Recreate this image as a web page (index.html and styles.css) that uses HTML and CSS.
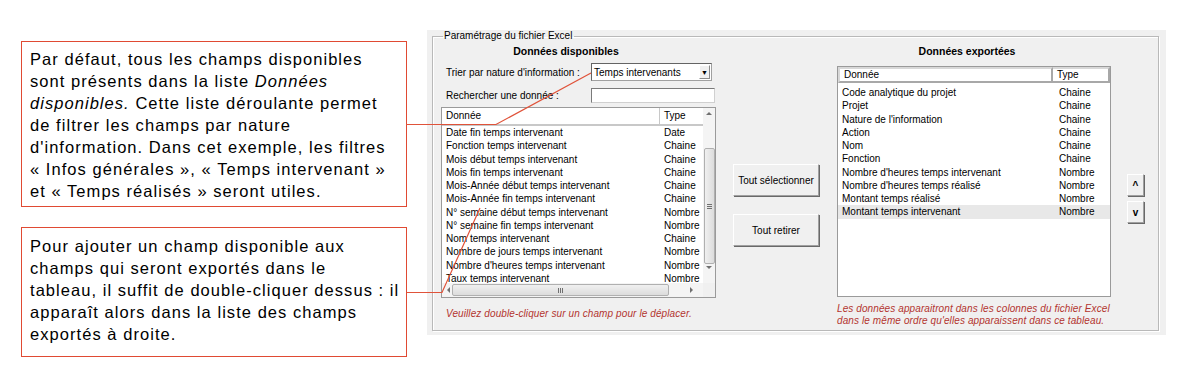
FILE: index.html
```html
<!DOCTYPE html>
<html lang="fr">
<head>
  <meta charset="UTF-8">
  <meta name="viewport" content="width=device-width, initial-scale=1.0">
  <title>Paramétrage du fichier Excel</title>
  <link rel="stylesheet" href="styles.css">
</head>
<body>
  <div class="notes">
    <div class="callout first">
      <p>Par défaut, tous les champs disponibles<br>
      sont présents dans la liste <i>Données</i><br>
      <i>disponibles.</i> Cette liste déroulante permet<br>
      de filtrer les champs par nature<br>
      d'information. Dans cet exemple, les filtres<br>
      « Infos générales », « Temps intervenant »<br>
      et « Temps réalisés » seront utiles.</p>
    </div>
    <div class="callout second">
      <p>Pour ajouter un champ disponible aux<br>
      champs qui seront exportés dans le<br>
      tableau, il suffit de double-cliquer dessus : il<br>
      apparaît alors dans la liste des champs<br>
      exportés à droite.</p>
    </div>
  </div>

  <div class="panel">
    <fieldset class="group">
      <legend>Paramétrage du fichier Excel</legend>
      <div class="columns">

        <div class="col-left">
          <div class="title left-title">Données disponibles</div>
          <div class="field sort">
            <label>Trier par nature d'information :</label>
            <div class="combo">
              <span>Temps intervenants</span>
              <span class="combo-btn">▼</span>
            </div>
          </div>
          <div class="field search">
            <label>Rechercher une donnée :</label>
            <div class="textbox"></div>
          </div>
          <div class="list list-left">
            <div class="list-body">
              <div class="head">
                <span class="name">Donnée</span>
                <span class="type">Type</span>
              </div>
              <div class="rows">
                <div class="row"><span class="name">Date fin temps intervenant</span><span class="type">Date</span></div>
                <div class="row"><span class="name">Fonction temps intervenant</span><span class="type">Chaine</span></div>
                <div class="row"><span class="name">Mois début temps intervenant</span><span class="type">Chaine</span></div>
                <div class="row"><span class="name">Mois fin temps intervenant</span><span class="type">Chaine</span></div>
                <div class="row"><span class="name">Mois-Année début temps intervenant</span><span class="type">Chaine</span></div>
                <div class="row"><span class="name">Mois-Année fin temps intervenant</span><span class="type">Chaine</span></div>
                <div class="row"><span class="name">N° semaine début temps intervenant</span><span class="type">Nombre</span></div>
                <div class="row"><span class="name">N° semaine fin temps intervenant</span><span class="type">Nombre</span></div>
                <div class="row"><span class="name">Nom temps intervenant</span><span class="type">Chaine</span></div>
                <div class="row"><span class="name">Nombre de jours temps intervenant</span><span class="type">Nombre</span></div>
                <div class="row"><span class="name">Nombre d'heures temps intervenant</span><span class="type">Nombre</span></div>
                <div class="row"><span class="name">Taux temps intervenant</span><span class="type">Nombre</span></div>
              </div>
            </div>
            <div class="vscroll">
              <span class="arrow up"></span>
              <span class="vthumb"><span class="grip-v"></span></span>
              <span class="arrow down"></span>
            </div>
            <div class="hscroll">
              <span class="arrow left"></span>
              <span class="hthumb"><span class="grip-h"></span></span>
              <span class="arrow right"></span>
            </div>
            <div class="corner"></div>
          </div>
          <p class="hint">Veuillez double-cliquer sur un champ pour le déplacer.</p>
        </div>

        <div class="col-mid">
          <button class="btn">Tout sélectionner</button>
          <button class="btn">Tout retirer</button>
        </div>

        <div class="col-right">
          <div class="title right-title">Données exportées</div>
          <div class="list list-right">
            <div class="head">
              <span class="name">Donnée</span>
              <span class="type">Type</span>
            </div>
            <div class="rows">
              <div class="row"><span class="name">Code analytique du projet</span><span class="type">Chaine</span></div>
              <div class="row"><span class="name">Projet</span><span class="type">Chaine</span></div>
              <div class="row"><span class="name">Nature de l'information</span><span class="type">Chaine</span></div>
              <div class="row"><span class="name">Action</span><span class="type">Chaine</span></div>
              <div class="row"><span class="name">Nom</span><span class="type">Chaine</span></div>
              <div class="row"><span class="name">Fonction</span><span class="type">Chaine</span></div>
              <div class="row"><span class="name">Nombre d'heures temps intervenant</span><span class="type">Nombre</span></div>
              <div class="row"><span class="name">Nombre d'heures temps réalisé</span><span class="type">Nombre</span></div>
              <div class="row"><span class="name">Montant temps réalisé</span><span class="type">Nombre</span></div>
              <div class="row selected"><span class="name">Montant temps intervenant</span><span class="type">Nombre</span></div>
            </div>
          </div>
          <p class="hint">Les données apparaitront dans les colonnes du fichier Excel<br>dans le même ordre qu'elles apparaissent dans ce tableau.</p>
        </div>

        <div class="col-arrows">
          <button class="small-btn">^</button>
          <button class="small-btn">v</button>
        </div>

      </div>
    </fieldset>
  </div>

  <!-- callout connectors -->
  <svg class="connectors" width="1192" height="380" viewBox="0 0 1192 380">
    <polyline points="406,124.5 496,124.5 591,73" />
    <polyline points="407,292.5 442,292.5 480,208" />
  </svg>
</body>
</html>
```

FILE: styles.css
```css
body {
  margin: 0;
  display: flex;
  align-items: flex-start;
  background: #ffffff;
  font-family: "Liberation Sans", Arial, sans-serif;
  color: #000;
}

/* callouts */
.notes {
  width: 386px;
  padding: 41px 0 0 21px;
  display: flex;
  flex-direction: column;
  gap: 20px;
}
.callout {
  box-sizing: border-box;
  border: 1px solid #e04a33;
  padding: 0 0 0 8px;
}
.callout p {
  margin: 0;
  font-size: 16.5px;
  letter-spacing: 1.05px;
  line-height: 22px;
  white-space: nowrap;
}
.callout.first {
  height: 166px;
  padding-top: 6px;
}
.callout.second {
  height: 130px;
  padding-top: 7px;
}

/* dialog panel */
.panel {
  margin: 30px 0 0 20px;
  width: 739px;
  height: 305px;
  box-sizing: border-box;
  padding: 0 7px 0 5px;
  background: #f0f0f0;
  font-size: 10px;
}
.group {
  margin: 0;
  padding: 0 0 0 8px;
  height: 301px;
  box-sizing: border-box;
  border: 1px solid #b9b9b9;
  box-shadow: inset 1px 1px 0 #fff, 1px 1px 0 #fff;
}
.group legend {
  padding: 0 2px 0 1px;
  margin-left: 2px;
  font-size: 10px;
  line-height: 12px;
}
.columns {
  display: flex;
  align-items: flex-start;
}
.title {
  font-weight: bold;
  font-size: 10.5px;
  line-height: 14px;
  margin-top: 2px;
  text-align: center;
}
.left-title { padding-right: 25px; }
.right-title { padding-right: 14px; }

/* left column */
.col-left {
  width: 275px;
}
.field {
  display: flex;
  align-items: center;
  padding-left: 5px;
}
.field label {
  width: 145px;
}
.sort {
  margin-top: 5px;
  height: 18px;
}
.search {
  margin-top: 7px;
  height: 15px;
}
.combo {
  box-sizing: border-box;
  width: 121px;
  height: 18px;
  display: flex;
  align-items: center;
  justify-content: space-between;
  background: #fff;
  border: 1px solid #7a7a7a;
  border-color: #646464 #a0a0a0 #a0a0a0 #646464;
  padding-left: 2px;
}
.combo-btn {
  box-sizing: border-box;
  width: 11px;
  height: 14px;
  margin-right: 1px;
  font-size: 7px;
  line-height: 14px;
  text-align: center;
  background: #f0f0f0;
  border: 1px solid;
  border-color: #fff #8a8a8a #8a8a8a #fff;
}
.textbox {
  box-sizing: border-box;
  width: 124px;
  height: 15px;
  background: #fff;
  border: 1px solid;
  border-color: #7a7a7a #d0d0d0 #d0d0d0 #7a7a7a;
}

.list {
  box-sizing: border-box;
  background: #fff;
  border: 1px solid #9a9a9a;
  overflow: hidden;
}
.list-left {
  margin-top: 4px;
  height: 191px;
  display: grid;
  grid-template-columns: 261px 12px;
  grid-template-rows: 175px 14px;
}
.list-body {
  overflow: hidden;
}
.list .head {
  display: flex;
  height: 16px;
  line-height: 16px;
  border-bottom: 2px solid #c8c8c8;
}
.list-left .head .name {
  border-right: 1px solid #c8c8c8;
}
.list .row {
  display: flex;
  height: 13.25px;
  line-height: 13.25px;
  white-space: nowrap;
}
.list-left .name {
  box-sizing: border-box;
  width: 218px;
  padding-left: 4px;
  flex: none;
}
.list-left .type {
  padding-left: 4px;
  flex: none;
}

/* scrollbars */
.vscroll {
  display: flex;
  flex-direction: column;
  align-items: center;
  background: #f4f4f4;
}
.vthumb {
  box-sizing: border-box;
  width: 11px;
  height: 116px;
  margin: 33px 0 2px;
  border: 1px solid #b0b0b0;
  border-radius: 2px;
  background: linear-gradient(to right, #f0f0f0, #dcdcdc);
  display: flex;
  align-items: center;
  justify-content: center;
}
.grip-v {
  width: 5px;
  height: 5px;
  border-top: 1px solid #707070;
  border-bottom: 1px solid #707070;
  box-sizing: border-box;
  background: linear-gradient(#707070, #707070) center / 5px 1px no-repeat;
}
.hscroll {
  display: flex;
  align-items: center;
  background: #f4f4f4;
}
.hthumb {
  box-sizing: border-box;
  width: 217px;
  height: 12px;
  margin-left: 2px;
  margin-right: auto;
  border: 1px solid #b0b0b0;
  border-radius: 2px;
  background: linear-gradient(#f0f0f0, #dcdcdc);
  display: flex;
  align-items: center;
  justify-content: center;
}
.grip-h {
  width: 5px;
  height: 5px;
  border-left: 1px solid #707070;
  border-right: 1px solid #707070;
  box-sizing: border-box;
  background: linear-gradient(#707070, #707070) center / 1px 5px no-repeat;
}
.corner {
  background: #f0f0f0;
}
.arrow {
  width: 0;
  height: 0;
  border: 3px solid transparent;
}
.arrow.up {
  margin-top: 4px;
  border-bottom: 3px solid #707070;
  border-top-width: 0;
}
.arrow.down {
  border-top: 3px solid #707070;
  border-bottom-width: 0;
}
.arrow.left {
  margin-left: 5px;
  border-right: 3px solid #707070;
  border-left-width: 0;
}
.arrow.right {
  margin-right: 10px;
  border-left: 3px solid #707070;
  border-right-width: 0;
}

.hint {
  margin: 0;
  color: #b3342f;
  font-style: italic;
  line-height: 12px;
  letter-spacing: 0.1px;
  white-space: nowrap;
}
.col-left .hint {
  margin-top: 10px;
  padding-left: 5px;
}

/* middle */
.col-mid {
  width: 86px;
  margin: 122px 0 0 17px;
  display: flex;
  flex-direction: column;
  gap: 18px;
}
.btn, .small-btn {
  box-sizing: border-box;
  font-family: "Liberation Sans", Arial, sans-serif;
  font-size: 10px;
  color: #000;
  background: #f0f0f0;
  border: 1px solid;
  border-color: #fff #a0a0a0 #a0a0a0 #fff;
  box-shadow: 1px 1px 0 #696969;
  padding: 0;
}
.btn {
  width: 86px;
  height: 32px;
}

/* right column */
.col-right {
  width: 274px;
  margin-left: 18px;
}
.list-right {
  margin-top: 8px;
  height: 231px;
}
.list-right .head {
  height: 16px;
  border: none;
}
.list-right .head span {
  box-sizing: border-box;
  border: 2px solid #a8a8a8;
  border-top-color: #d8d8d8;
  border-left-color: #d8d8d8;
  line-height: 12px;
}
.list-right .head .name {
  padding-left: 4px;
}
.list-right .head .type {
  flex: 1;
  border-left: none;
  padding-left: 4px;
}
.list-right .rows {
  padding-top: 3px;
}
.list-right .name {
  box-sizing: border-box;
  width: 215px;
  padding-left: 4px;
  flex: none;
}
.list-right .row .type {
  padding-left: 6px;
}
.list-right .selected {
  background: #e8e8e8;
}
.col-right .hint {
  margin-top: 6px;
}

/* move buttons */
.col-arrows {
  width: 17px;
  margin: 132px 0 0 16px;
  display: flex;
  flex-direction: column;
  gap: 5px;
}
.small-btn {
  width: 17px;
  height: 22px;
  font-weight: bold;
  font-size: 10px;
}

/* connectors over the dialog */
.connectors {
  position: absolute;
  top: 0;
  left: 0;
  pointer-events: none;
}
.connectors polyline {
  fill: none;
  stroke: #e0533a;
  stroke-width: 1.2;
}
```
